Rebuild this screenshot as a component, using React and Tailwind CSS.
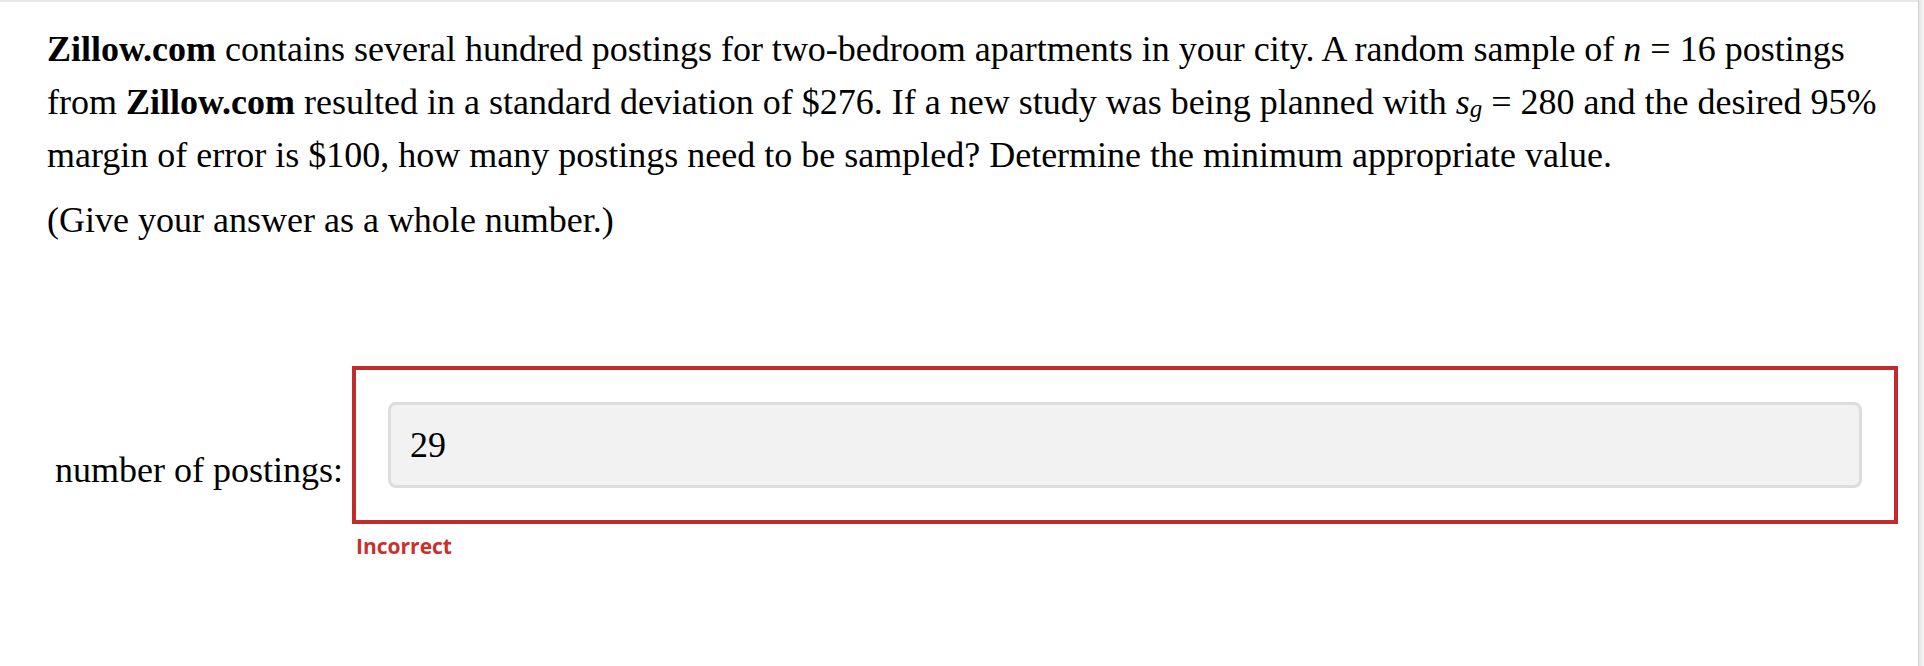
export default function App() {
  const serif = { fontFamily: '"Liberation Serif", "Times New Roman", serif' };
  return (
    <div className="flex min-h-[666px] w-full bg-white">
      <div className="flex-1 border-t-2 border-[#e8e8e8] bg-white">
        <div className="pl-[47px] pr-[20px] pt-[21px] text-[36px] leading-[53px] text-black" style={serif}>
          <p className="whitespace-nowrap">
            <b>Zillow.com</b> contains several hundred postings for two-bedroom apartments in your city. A random sample of <i>n</i> = 16 postings
            <br />
            from <b>Zillow.com</b> resulted in a standard deviation of $276. If a new study was being planned with <i>s</i>
            <sub className="relative top-[3px] align-baseline text-[25px] leading-none">
              <i>g</i>
            </sub>{' '}
            = 280 and the desired 95%
            <br />
            margin of error is $100, how many postings need to be sampled? Determine the minimum appropriate value.
          </p>
          <p className="mt-[12px]">(Give your answer as a whole number.)</p>

          <div className="mt-[119px] flex items-end">
            <div className="mb-[27px] w-[305px] shrink-0 whitespace-nowrap pl-[8px]">number of postings:</div>
            <div className="flex-1 border-4 border-[#c12b2b] p-[32px]">
              <div className="flex h-[86px] items-center rounded-[8px] border-[3px] border-[#dddddd] bg-[#f2f2f2] pl-[19px]">
                29
              </div>
            </div>
          </div>
          <div
            className="ml-[309px] mt-[8px] text-[21px] font-bold leading-[28px] text-[#c9302c]"
            style={{ fontFamily: '"Open Sans", sans-serif' }}
          >
            Incorrect
          </div>
        </div>
      </div>
      <div className="w-[6px] border-l border-[#cfcfcf] bg-gradient-to-r from-[#e6e6e6] to-[#f6f6f6]" />
    </div>
  );
}
